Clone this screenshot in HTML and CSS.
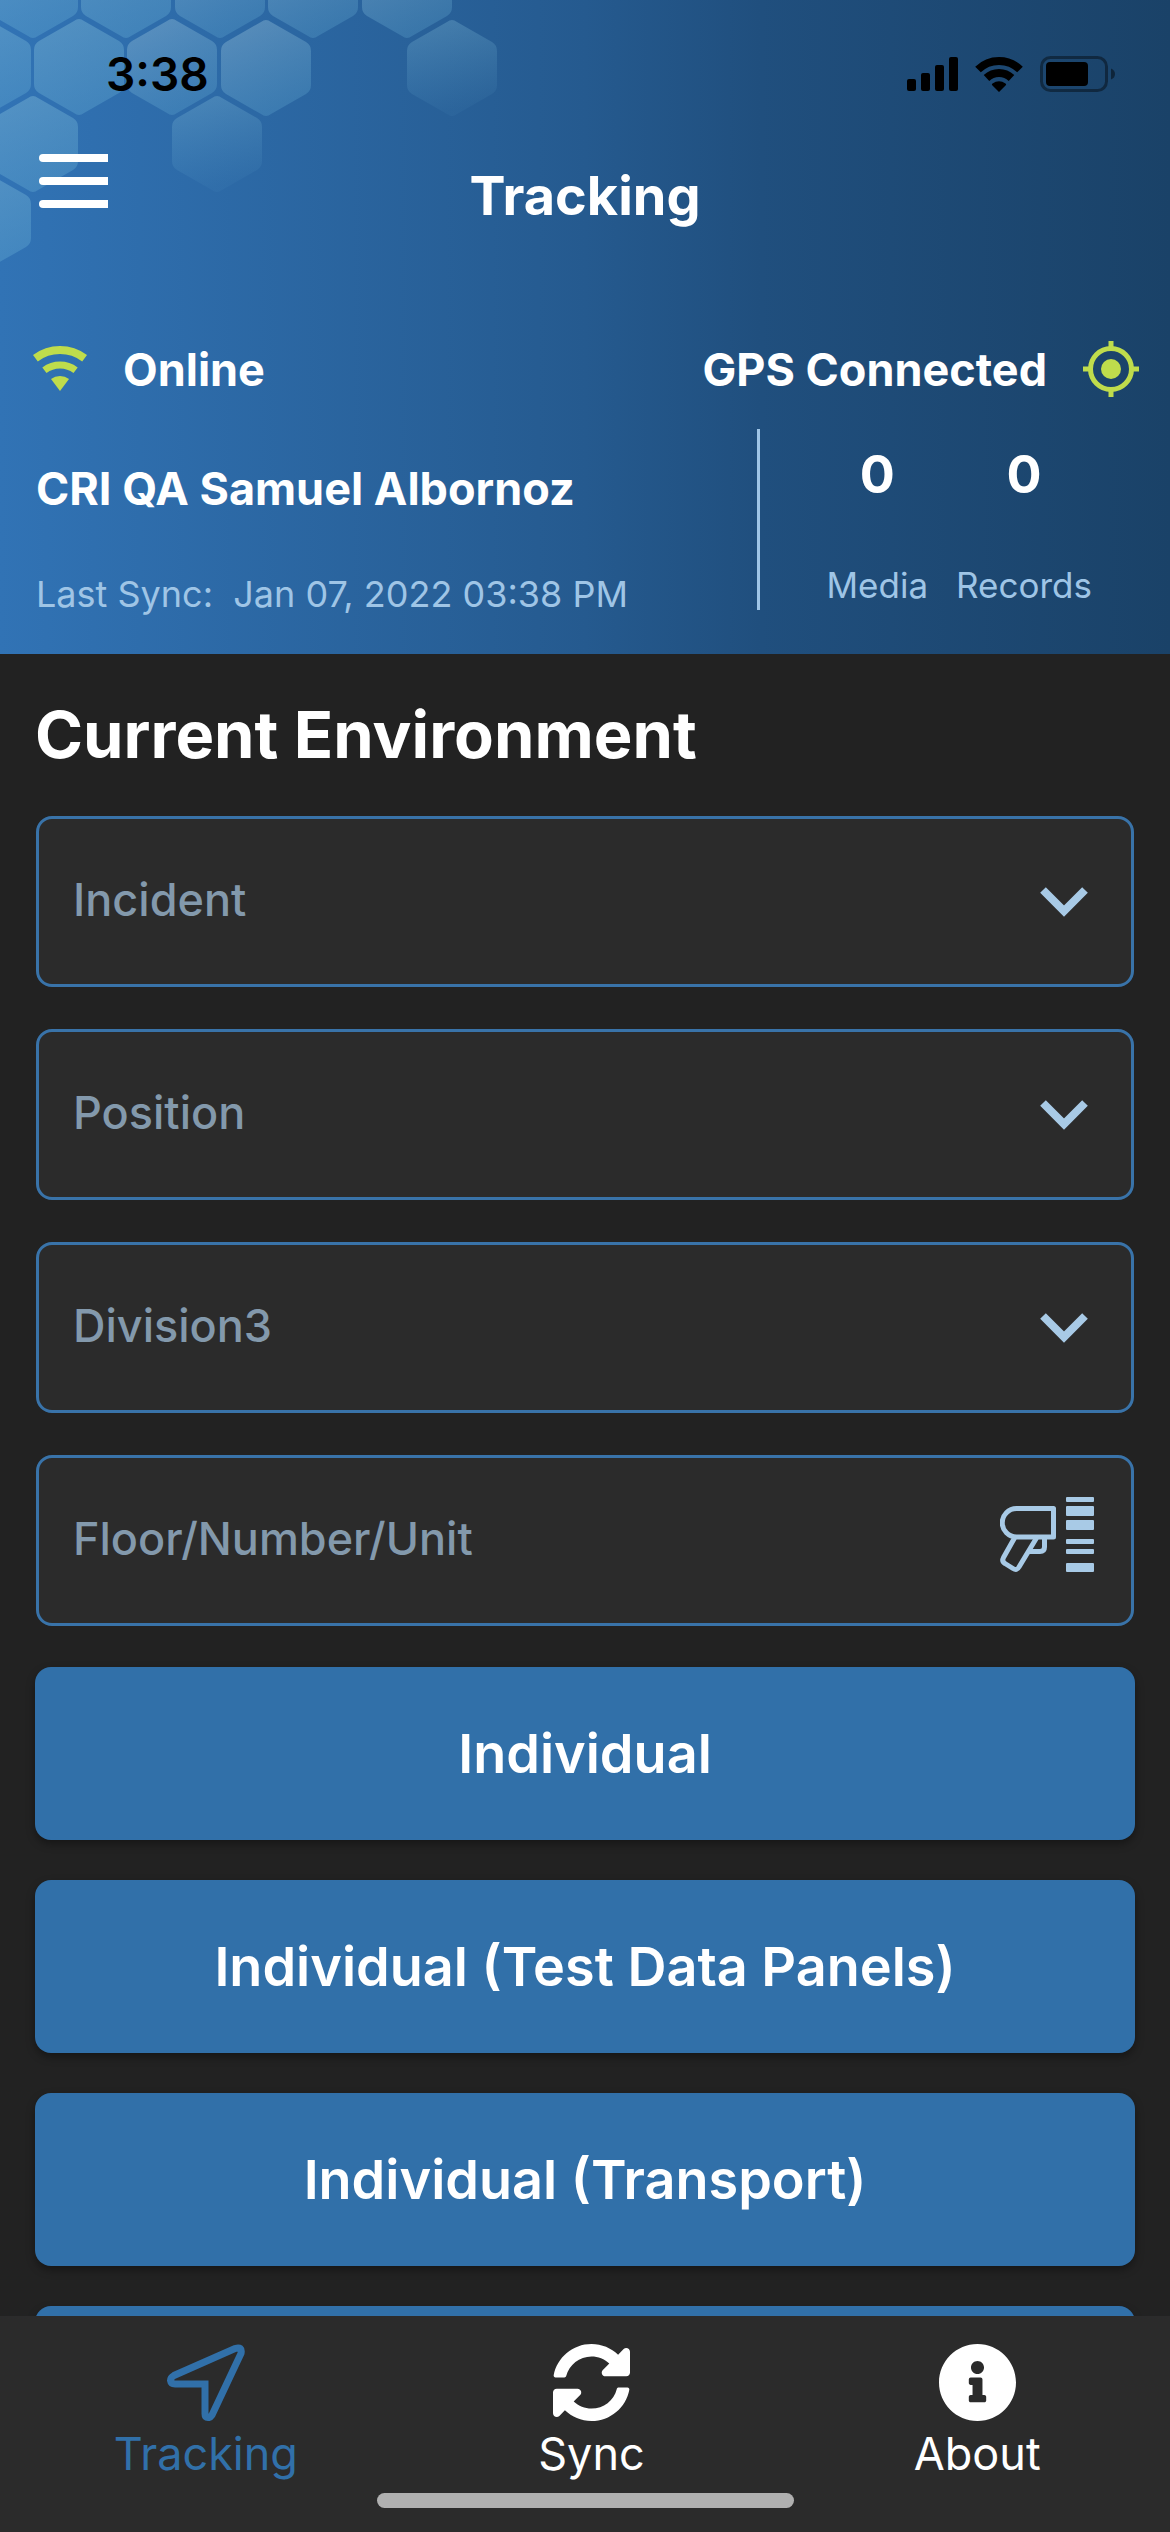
FILE: index.html
```html
<!DOCTYPE html>
<html lang="en">
<head>
<meta charset="utf-8">
<meta name="viewport" content="width=device-width, initial-scale=1">
<title>Tracking</title>
<link rel="stylesheet" href="styles.css">
</head>
<body>
<header class="header">
  <svg class="hexes" viewBox="0 0 520 280" width="520" height="280" aria-hidden="true">
    <defs>
      <linearGradient id="strong" x1="0" y1="0" x2="0.4" y2="1">
        <stop offset="0" stop-color="#8cc4dc" stop-opacity="0.4"/>
        <stop offset="1" stop-color="#6cb4d8" stop-opacity="0.32"/>
      </linearGradient>
      <linearGradient id="mid" x1="0" y1="0" x2="0.4" y2="1">
        <stop offset="0" stop-color="#a4c8dc" stop-opacity="0.4"/>
        <stop offset="1" stop-color="#6cb4d8" stop-opacity="0.26"/>
      </linearGradient>
      <linearGradient id="faint" x1="0" y1="0" x2="0.2" y2="1">
        <stop offset="0" stop-color="#8cc4dc" stop-opacity="0.32"/>
        <stop offset="1" stop-color="#6cb4d8" stop-opacity="0.06"/>
      </linearGradient>
      <path id="hex" d="M-5 -46 Q0 -50 5 -46 L40 -26 Q45 -23 45 -17 V17 Q45 23 40 26 L5 46 Q0 50 -5 46 L-40 26 Q-45 23 -45 17 V-17 Q-45 -23 -40 -26 Z"/>
    </defs>
    <g fill="url(#strong)">
      <use href="#hex" x="33" y="-10"/><use href="#hex" x="126" y="-10"/>
      <use href="#hex" x="-14" y="67"/><use href="#hex" x="79" y="67"/>
      <use href="#hex" x="33" y="144"/><use href="#hex" x="-14" y="221"/>
    </g>
    <g fill="url(#mid)">
      <use href="#hex" x="220" y="-10"/><use href="#hex" x="313" y="-10"/><use href="#hex" x="407" y="-10"/>
      <use href="#hex" x="172" y="67"/><use href="#hex" x="266" y="68"/>
    </g>
    <g fill="url(#faint)">
      <use href="#hex" x="452" y="68"/><use href="#hex" x="217" y="144"/>
    </g>
  </svg>

  <div class="status-bar">
    <time class="clock">3:38</time>
    <div class="status-icons">
      <svg width="51" height="34" viewBox="0 0 51 34" aria-hidden="true">
        <rect x="0" y="22" width="9" height="12" rx="2"/><rect x="14" y="16" width="9" height="18" rx="2"/>
        <rect x="28" y="8" width="9" height="26" rx="2"/><rect x="42" y="0" width="9" height="34" rx="2"/>
      </svg>
      <svg width="48" height="36" viewBox="0 0 48 36" aria-hidden="true">
        <g fill="none" stroke="#000" stroke-width="8"><path d="M3 13.5A30 30 0 0 1 45 13.5"/><path d="M11.5 22A18 18 0 0 1 36.500 22"/></g>
        <path d="M24 36 17 29Q16.500 28 17.500 27.500 24 23 30.500 27.500 31.500 28 31 29Z"/>
      </svg>
      <svg width="76" height="36" viewBox="0 0 76 36" aria-hidden="true">
        <rect x="1.500" y="1.500" width="65" height="33" rx="9" fill="none" stroke="#000" stroke-opacity="0.4" stroke-width="3"/>
        <rect x="6" y="6" width="42" height="24" rx="4"/><path d="M71 12.500Q75 14 75 18T71 23.500Z" fill-opacity="0.45"/>
      </svg>
    </div>
  </div>

  <div class="title-bar">
    <button class="menu" type="button" aria-label="Menu"><span></span><span></span><span></span></button>
    <h1 class="title">Tracking</h1>
  </div>

  <div class="connection">
    <div class="connection-item">
      <svg width="54" height="46" viewBox="0 0 54 46" fill="#bfdc4c" aria-hidden="true">
        <g fill="none" stroke="#bfdc4c"><path d="M2.400 12.200A41 41 0 0 1 51.600 12.200" stroke-width="8"/><path d="M11.400 24.200A26 26 0 0 1 42.600 24.200" stroke-width="7"/></g>
        <path d="M27 45 18 33A15 15 0 0 1 36 33Z"/>
      </svg>
      <span>Online</span>
    </div>
    <div class="connection-item">
      <span>GPS Connected</span>
      <svg width="56" height="56" viewBox="0 0 56 56" fill="none" stroke="#bfdc4c" stroke-width="5" aria-hidden="true">
        <circle cx="28" cy="28" r="20.500"/><path d="M28 0V7M28 49V56M0 28H7M49 28H56"/><circle cx="28" cy="28" r="10" fill="#bfdc4c" stroke="none"/>
      </svg>
    </div>
  </div>

  <div class="profile">
    <div class="user">
      <strong class="user-name">CRI QA Samuel Albornoz</strong>
      <span class="caption">Last Sync:&nbsp; Jan 07, 2022 03:38 PM</span>
    </div>
    <dl class="stats">
      <div class="stat"><dd class="count">0</dd><dt class="caption">Media</dt></div>
      <div class="stat"><dd class="count">0</dd><dt class="caption">Records</dt></div>
    </dl>
  </div>
</header>

<main class="content">
  <h2 class="heading">Current Environment</h2>
  <form class="fields">
    <div class="field">
      <select class="control" aria-label="Incident"><option>Incident</option></select>
      <svg class="chevron" width="48" height="30" viewBox="0 0 48 30" aria-hidden="true"><path d="M3 3 24 24 45 3"/></svg>
    </div>
    <div class="field">
      <select class="control" aria-label="Position"><option>Position</option></select>
      <svg class="chevron" width="48" height="30" viewBox="0 0 48 30" aria-hidden="true"><path d="M3 3 24 24 45 3"/></svg>
    </div>
    <div class="field">
      <select class="control" aria-label="Division3"><option>Division3</option></select>
      <svg class="chevron" width="48" height="30" viewBox="0 0 48 30" aria-hidden="true"><path d="M3 3 24 24 45 3"/></svg>
    </div>
    <div class="field">
      <input class="control" type="text" aria-label="Floor/Number/Unit" placeholder="Floor/Number/Unit">
      <button class="scan" type="button" aria-label="Scan barcode">
        <svg width="94" height="76" viewBox="0 0 94 76" aria-hidden="true">
          <g fill="none" stroke="#a8cae6" stroke-width="5" stroke-linejoin="round">
            <path d="M53.500 11.500V40H16.500A14.200 14.200 0 0 1 16.500 11.500Z"/>
            <path d="M14.500 41 3.500 60.500Q1.500 64.500 5 66.500L13 71.500Q17 74 19 70L36.500 41"/>
            <path d="M44.500 41V50Q44.500 54.500 40 54.500H29"/>
          </g>
          <g fill="#a8cae6">
            <rect x="66" y="0" width="28" height="5" rx="1"/><rect x="66" y="9" width="28" height="10" rx="1"/>
            <rect x="66" y="23" width="28" height="10" rx="1"/><rect x="66" y="42" width="28" height="5" rx="1"/>
            <rect x="66" y="52" width="28" height="5" rx="1"/><rect x="66" y="66" width="28" height="9" rx="1"/>
          </g>
        </svg>
      </button>
    </div>
  </form>
  <div class="actions">
    <button class="action" type="button">Individual</button>
    <button class="action" type="button">Individual (Test Data Panels)</button>
    <button class="action" type="button">Individual (Transport)</button>
    <button class="action" type="button" aria-label="More"></button>
  </div>
</main>

<footer class="tab-bar">
  <nav class="tabs">
    <a class="tab tab-active" href="#tracking">
      <svg width="78" height="77" viewBox="0 0 78 77" fill="none" stroke="currentColor" stroke-width="7" aria-hidden="true"><path d="M38 40H8Q4 40 3.500 36.500 3.500 33.500 7 31.500L68 4.500Q75.500 2 74 9.500L45 71Q43 74 41 73.500 38 73.500 38 70Z"/></svg>
      <span>Tracking</span>
    </a>
    <a class="tab" href="#sync">
      <svg width="77" height="77" viewBox="8 8 496 496" fill="currentColor" aria-hidden="true"><path d="M370.720 133.280C339.458 104.008 298.888 87.962 255.848 88c-77.458.068-144.328 53.178-162.791 126.850-1.344 5.363-6.122 9.150-11.651 9.150H24.103c-7.498 0-13.194-6.807-11.807-14.176C33.933 94.924 134.813 8 256 8c66.448 0 126.791 26.136 171.315 68.685L463.030 40.970C478.149 25.851 504 36.559 504 57.941V192c0 13.255-10.745 24-24 24H345.941c-21.382 0-32.090-25.851-16.971-40.971l41.750-41.749zM32 296h134.059c21.382 0 32.090 25.851 16.971 40.971l-41.750 41.750c31.262 29.273 71.835 45.319 114.876 45.280 77.418-.070 144.315-53.144 162.787-126.849 1.344-5.363 6.122-9.150 11.651-9.150h57.304c7.498 0 13.194 6.807 11.807 14.176C478.067 417.076 377.187 504 256 504c-66.448 0-126.791-26.136-171.315-68.685L48.970 471.030C33.851 486.149 8 475.441 8 454.059V320c0-13.255 10.745-24 24-24z"/></svg>
      <span>Sync</span>
    </a>
    <a class="tab" href="#about">
      <svg width="77" height="77" viewBox="8 8 496 496" fill="currentColor" aria-hidden="true"><path d="M256 8C119.043 8 8 119.083 8 256c0 136.997 111.043 248 248 248s248-111.003 248-248C504 119.083 392.957 8 256 8zm0 110c23.196 0 42 18.804 42 42s-18.804 42-42 42-42-18.804-42-42 18.804-42 42-42zm56 254c0 6.627-5.373 12-12 12h-88c-6.627 0-12-5.373-12-12v-24c0-6.627 5.373-12 12-12h12v-64h-12c-6.627 0-12-5.373-12-12v-24c0-6.627 5.373-12 12-12h64c6.627 0 12 5.373 12 12v100h12c6.627 0 12 5.373 12 12v24z"/></svg>
      <span>About</span>
    </a>
  </nav>
  <div class="home-indicator"></div>
</footer>
</body>
</html>
```
FILE: styles.css
```css
* { box-sizing: border-box; }

body {
  margin: 0;
  height: 100vh;
  display: flex;
  flex-direction: column;
  background: #222;
  color: #fff;
  font-family: "Inter", "Open Sans", sans-serif;
}

h1, h2, dl, dd { margin: 0; }
svg { display: block; flex: none; }
button, select, input { font: inherit; color: inherit; }

.header {
  position: relative;
  flex: none;
  padding-bottom: 44px;
  background: linear-gradient(90deg, #3173b5 0%, #255a8f 50%, #204f7e 65%, #1a4268 100%);
}
.hexes { position: absolute; top: 0; left: 0; }
.status-bar, .title-bar, .connection, .profile { position: relative; }

.status-bar {
  height: 148px;
  padding: 0 54px 0 106px;
  display: flex;
  align-items: center;
  justify-content: space-between;
  color: #000;
}
.clock { font-size: 46px; font-weight: 600; }
.status-icons { display: flex; align-items: center; gap: 17px; }

.title-bar {
  height: 96px;
  padding: 0 39px;
  display: grid;
  grid-template-columns: 69px 1fr 69px;
}
.menu {
  align-self: start;
  display: grid;
  gap: 15px;
  padding: 6px 0;
  border: 0;
  background: none;
}
.menu span { height: 8px; border-radius: 4px 0 0 4px; background: #fff; }
.title { font-size: 54px; line-height: 96px; font-weight: 700; text-align: center; }

.connection {
  margin-top: 97px;
  padding: 0 31px 0 33px;
  display: flex;
  justify-content: space-between;
}
.connection-item {
  height: 56px;
  display: flex;
  align-items: center;
  gap: 36px;
  font-size: 45px;
  font-weight: 700;
}

.profile {
  margin-top: 32px;
  padding: 0 36px;
  display: flex;
  justify-content: space-between;
}
.user { padding-top: 34px; display: grid; gap: 63px; }
.user-name { font-size: 45px; line-height: 52px; font-weight: 700; }
.caption { font-size: 36px; line-height: 32px; color: #9fc5e6; }
.stats {
  padding: 20px 42px 0 67px;
  border-left: 3px solid #9fc5e6;
  display: flex;
  gap: 28px;
}
.stat { display: flex; flex-direction: column; align-items: center; gap: 68px; }
.stat .caption { font-size: 35px; }
.count { font-size: 52px; line-height: 52px; font-weight: 700; }

.content { flex: 1; min-height: 0; overflow: hidden; padding: 41px 35px 0; }
.heading { font-size: 65px; line-height: 80px; font-weight: 700; }

.fields { margin: 41px 1px; display: grid; gap: 42px; }
.field {
  height: 171px;
  display: grid;
  align-items: center;
  border: 3px solid #3973a9;
  border-radius: 16px;
  background: #2b2b2b;
}
.field > * { grid-area: 1 / 1; }
.control {
  width: 100%;
  height: 100%;
  padding: 0 150px 4px 34px;
  border: 0;
  outline: 0;
  appearance: none;
  background: none;
  color: #8399ac;
  font-size: 45px;
  font-weight: 500;
}
.control::placeholder { color: #8399ac; opacity: 1; }
.chevron { justify-self: end; margin-right: 43px; fill: none; stroke: #a8cae6; stroke-width: 8; pointer-events: none; }
.scan { justify-self: end; margin-right: 37px; padding: 0 0 12px; border: 0; background: none; }

.actions { display: grid; gap: 40px; }
.action {
  height: 173px;
  border: 0;
  border-radius: 16px;
  background: #3170a9;
  box-shadow: 0 4px 8px rgba(0, 0, 0, 0.35);
  font-size: 54px;
  font-weight: 600;
}

.tab-bar { flex: none; padding: 28px 0 24px; background: #2b2b2b; }
.tabs { padding-left: 13px; display: grid; grid-template-columns: repeat(3, 1fr); }
.tab {
  display: grid;
  justify-items: center;
  gap: 11px;
  color: #fff;
  font-size: 45px;
  line-height: 44px;
  text-decoration: none;
}
.tab-active { color: #3170a9; }
.home-indicator { width: 417px; max-width: 60%; height: 15px; margin: 17px auto 0; border-radius: 8px; background: #b0b0b0; }
```
